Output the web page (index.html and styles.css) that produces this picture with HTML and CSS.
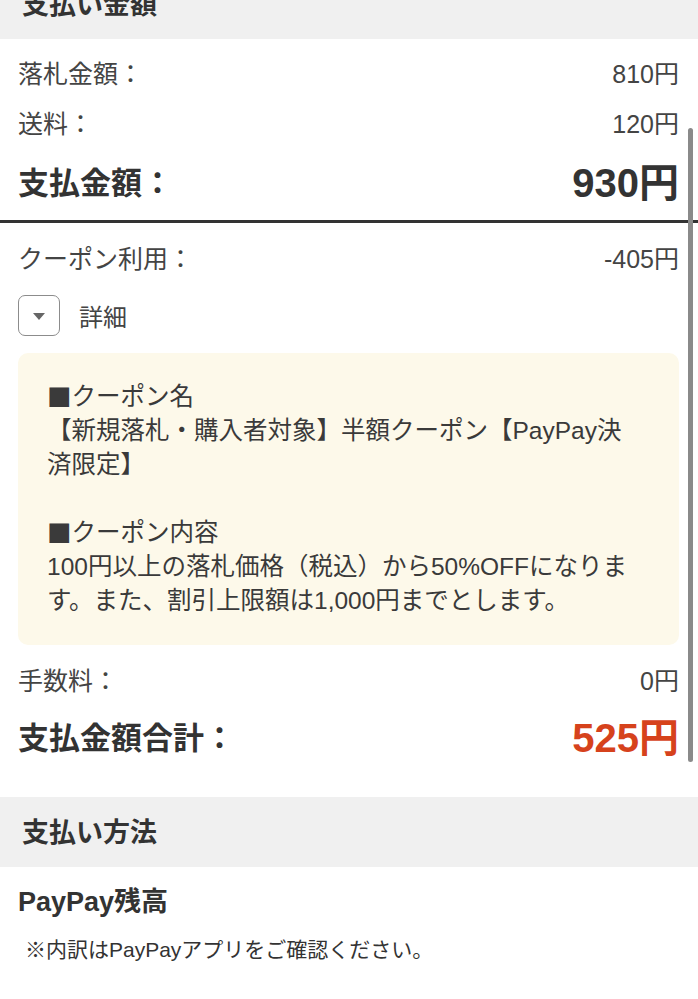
FILE: index.html
```html
<!DOCTYPE html>
<html lang="ja">
<head>
<meta charset="utf-8">
<title>支払い金額</title>
<link rel="stylesheet" href="styles.css">
</head>
<body>
<div class="page">
  <section class="sec-head"><h2>支払い金額</h2></section>
  <div class="summary">
    <div class="row"><span>落札金額：</span><span>810円</span></div>
    <div class="row"><span>送料：</span><span>120円</span></div>
    <div class="row total"><span>支払金額：</span><span class="big">930円</span></div>
  </div>
  <div class="rule"></div>
  <div class="summary second">
    <div class="row"><span>クーポン利用：</span><span>-405円</span></div>
    <div class="toggle">
      <span class="toggle-btn"><span class="tri"></span></span>
      <span class="toggle-label">詳細</span>
    </div>
    <div class="coupon">
      <p><span class="sq">■</span>クーポン名<br>【新規落札・購入者対象】半額クーポン【PayPay決<br>済限定】</p>
      <p><span class="sq">■</span>クーポン内容<br>100円以上の落札価格（税込）から50%OFFになりま<br>す。また、割引上限額は1,000円までとします。</p>
    </div>
    <div class="row fee"><span>手数料：</span><span>0円</span></div>
    <div class="row grand"><span>支払金額合計：</span><span class="big red">525円</span></div>
  </div>
  <section class="sec-head"><h2>支払い方法</h2></section>
  <div class="method">
    <div class="method-name">PayPay残高</div>
    <div class="method-note">※内訳はPayPayアプリをご確認ください。</div>
    <div class="method-btn"></div>
  </div>
</div>
<div class="scrollbar"></div>
</body>
</html>
```
FILE: styles.css
```css
* { box-sizing: border-box; }
html, body { margin: 0; padding: 0; background: #fff; }
body {
  font-family: "Liberation Sans", "Noto Sans CJK JP", sans-serif;
  color: #3a3a3a;
  overflow: hidden;
  height: 999px;
  position: relative;
}
.page { margin-top: -31px; }
.sec-head {
  background: #f0f0f0;
  height: 70px;
  display: flex;
  align-items: center;
  padding-left: 22px;
}
.sec-head h2 {
  margin: 0;
  font-size: 27px;
  font-weight: 700;
  color: #333;
  line-height: 1;
  padding-top: 3px;
}
.summary { padding: 8px 19px 7px 18px; }
.summary.second { padding-top: 9px; padding-bottom: 31px; }
.row {
  display: flex;
  justify-content: space-between;
  align-items: center;
  height: 50px;
  font-size: 25px;
  color: #444;
}
.row.total { height: 66px; font-size: 31px; font-weight: 700; color: #333; }
.row.grand { height: 62px; font-size: 31px; font-weight: 700; color: #333; }
.row .big { font-size: 40px; font-weight: 700; }
.row .red { color: #d6421c; }
.rule { height: 3px; background: #333; }
.toggle {
  display: flex;
  align-items: center;
  gap: 19px;
  height: 41px;
  margin-top: 13px;
}
.toggle-btn {
  width: 42px;
  height: 41px;
  border: 1.5px solid #8c8c8c;
  border-radius: 7px;
  display: flex;
  align-items: center;
  justify-content: center;
}
.tri {
  width: 0;
  height: 0;
  border-left: 6px solid transparent;
  border-right: 6px solid transparent;
  border-top: 7px solid #666;
  margin-top: 2px;
}
.toggle-label { font-size: 24px; color: #444; }
.coupon {
  margin-top: 17px;
  background: #fdf9ea;
  border-radius: 10px;
  padding: 27px 10px 27px 29px;
  font-size: 24.5px;
  line-height: 34px;
  color: #3a3a3a;
  white-space: nowrap;
}
.coupon p { margin: 0; }
.coupon p + p { margin-top: 34px; }
.sq {
  font-family: "Noto Sans CJK JP", sans-serif;
  display: inline-block;
  height: 34px;
  line-height: 34px;
  vertical-align: top;
}
.row.fee { margin-top: 9px; }
.method { padding: 15px 18px 0 18px; }
.method-name { font-size: 27px; font-weight: 600; line-height: 40px; color: #333; }
.method-note { font-size: 21px; line-height: 30px; margin-top: 13px; padding-left: 7px; color: #333; }
.method-btn {
  margin-top: 35px;
  margin-left: 2px;
  width: 161px;
  height: 60px;
  border: 1px solid #c4c4c4;
  border-radius: 4px;
}
.scrollbar {
  position: absolute;
  left: 688px;
  top: 128px;
  width: 5px;
  height: 634px;
  border-radius: 3px;
  background: #8a8a8a;
}
```
